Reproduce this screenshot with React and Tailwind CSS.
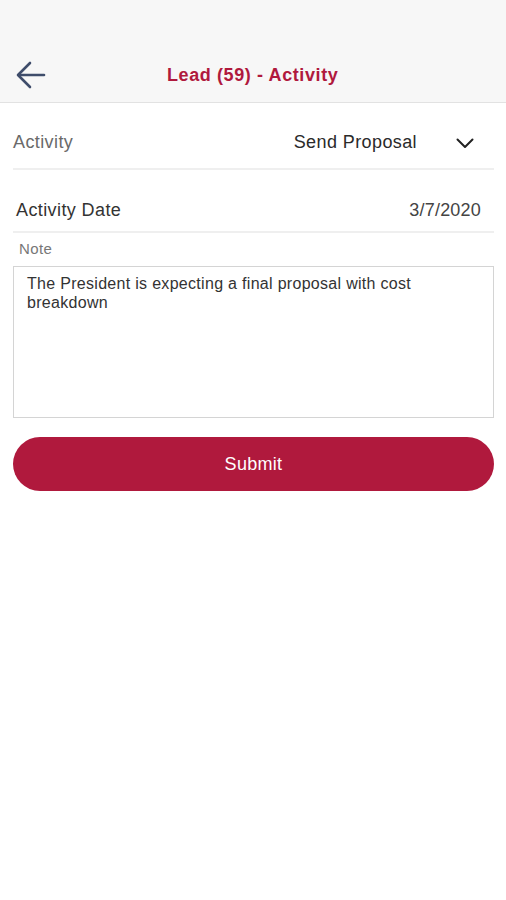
export default function App() {
  return (
    <div className="min-h-[900px] w-[506px] bg-white font-['Liberation_Sans',Arial,sans-serif]">
      <header className="flex h-[103px] items-end border-b border-[#e2e2e2] bg-[#f7f7f7] pb-[13px]">
        <button className="ml-[16px] flex h-[28px] w-[30px] items-center justify-center text-[#3f4d6b]">
          <svg width="30" height="28" viewBox="0 0 30 28" fill="none" stroke="currentColor" strokeWidth="2.6" strokeLinecap="round" strokeLinejoin="round">
            <path d="M28 14H3" />
            <path d="M14 2L2 14l12 12" />
          </svg>
        </button>
        <h1 className="ml-[121px] text-[18px] font-bold leading-[28px] tracking-[0.6px] text-[#b0193d]">
          Lead (59) - Activity
        </h1>
      </header>

      <main className="pl-[13px] pr-[12px]">
        <div className="flex h-[67px] items-end border-b-2 border-[#efefef] pb-[16px]">
          <span className="text-[18px] leading-[20px] tracking-[0.4px] text-[#6a6a6a]">Activity</span>
          <span className="ml-auto text-[18px] leading-[20px] tracking-[0.4px] text-[#2a2a2a]">Send Proposal</span>
          <svg className="mb-[3px] ml-[39px] mr-[20px]" width="18" height="11" viewBox="0 0 18 11" fill="none" stroke="#222" strokeWidth="2" strokeLinecap="round" strokeLinejoin="round">
            <path d="M1.5 1.5L9 9l7.5-7.5" />
          </svg>
        </div>

        <div className="flex h-[63px] items-end border-b-2 border-[#efefef] pb-[11px]">
          <span className="pl-[3px] text-[18px] leading-[20px] tracking-[0.4px] text-[#333]">Activity Date</span>
          <span className="ml-auto pr-[13px] text-[18px] leading-[20px] tracking-[0.2px] text-[#444]">3/7/2020</span>
        </div>

        <div className="pl-[6px] pt-[7px] text-[15px] leading-[18px] tracking-[0.4px] text-[#777]">Note</div>
        <div className="mt-[8px] h-[152px] border border-[#d4d4d4] px-[13px] pt-[7px] text-[16px] leading-[19px] tracking-[0.3px] text-[#333]">
          The President is expecting a final proposal with cost
          <br />
          breakdown
        </div>

        <button className="mt-[19px] h-[54px] w-full rounded-full bg-[#b0193d] text-[18px] tracking-[0.3px] text-white">
          Submit
        </button>
      </main>
    </div>
  );
}
